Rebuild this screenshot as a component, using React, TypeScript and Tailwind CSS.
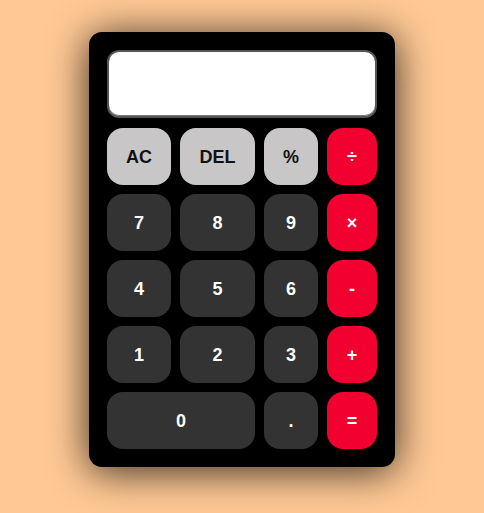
import React from "react";

type Key = { label: string; kind: "light" | "dark" | "op"; span?: boolean };

const keys: Key[] = [
  { label: "AC", kind: "light" },
  { label: "DEL", kind: "light" },
  { label: "%", kind: "light" },
  { label: "÷", kind: "op" },
  { label: "7", kind: "dark" },
  { label: "8", kind: "dark" },
  { label: "9", kind: "dark" },
  { label: "×", kind: "op" },
  { label: "4", kind: "dark" },
  { label: "5", kind: "dark" },
  { label: "6", kind: "dark" },
  { label: "-", kind: "op" },
  { label: "1", kind: "dark" },
  { label: "2", kind: "dark" },
  { label: "3", kind: "dark" },
  { label: "+", kind: "op" },
  { label: "0", kind: "dark", span: true },
  { label: ".", kind: "dark" },
  { label: "=", kind: "op" },
];

const kindClass = {
  light: "bg-[#c8c6c7] text-[#111]",
  dark: "bg-[#333333] text-white",
  op: "bg-[#f2002f] text-white",
};

export default function App() {
  return (
    <div
      className="min-h-screen w-full flex justify-center pt-8 bg-[#ffc995]"
      style={{ fontFamily: '"Liberation Sans", Arial, sans-serif' }}
    >
      <div className="w-[306px] h-[435px] bg-black rounded-[13px] p-[18px] flex flex-col shadow-[0_4px_40px_rgba(0,0,0,0.8)]">
        <div className="h-[68px] mb-[10px] bg-white rounded-[12px] border-2 border-[#555] shadow-[inset_0_-1px_0_#777]" />
        <div className="grid grid-cols-[64px_75px_54px_50px] auto-rows-[57px] gap-[9px]">
          {keys.map((k) => (
            <button
              key={k.label}
              className={`${kindClass[k.kind]} ${k.span ? "col-span-2" : ""} rounded-2xl text-lg font-bold flex items-center justify-center`}
            >
              {k.label}
            </button>
          ))}
        </div>
      </div>
    </div>
  );
}
